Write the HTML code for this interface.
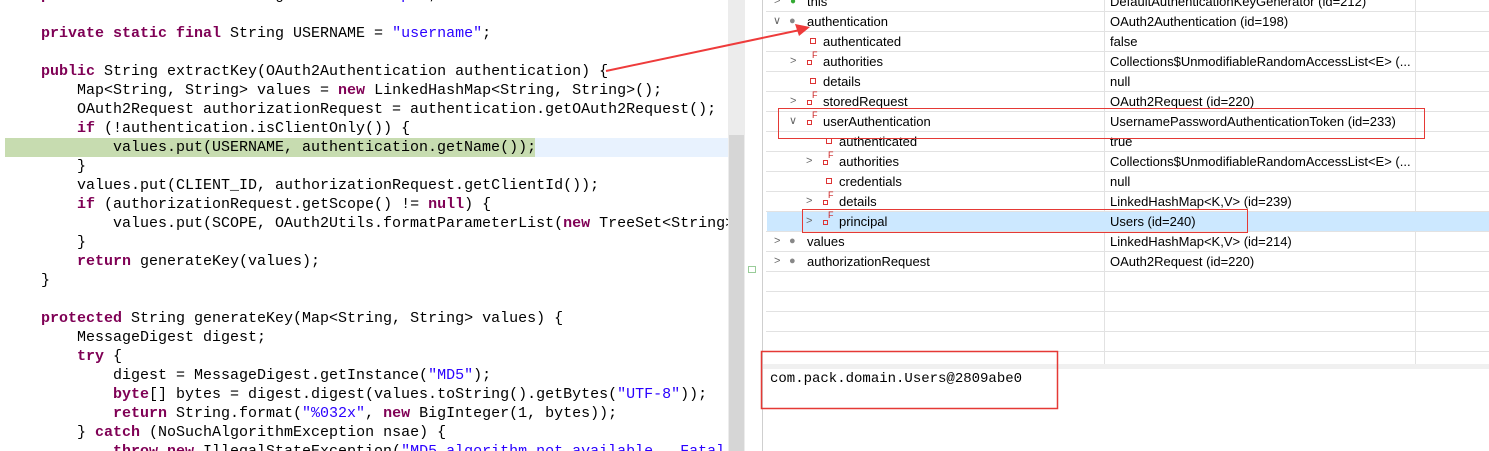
<!DOCTYPE html><html><head><style>
body{margin:0;width:1489px;height:451px;overflow:hidden;background:#fff;position:relative;font-family:"Liberation Sans",sans-serif}
.code{position:absolute;left:0;top:0;width:728px;height:451px;overflow:hidden}
.ln{position:absolute;left:0;height:19px;line-height:19px;font-family:"Liberation Mono",monospace;font-size:15px;color:#000;white-space:pre}
.k{color:#7f0055;font-weight:bold}.s{color:#2a00ff}
.sb{position:absolute;left:728px;top:0;width:17px;height:451px;background:#ececec}
.th{position:absolute;left:729px;top:135px;width:15px;height:316px;background:#d6d6d6}
.pane{position:absolute;left:762px;top:0;width:727px;height:451px;border-left:1px solid #cfcfcf}
.row{position:absolute;left:766px;width:723px;height:20px;border-bottom:1px solid #e2e2e2;font-size:13px;line-height:21px;color:#000}
.row span{position:absolute;white-space:nowrap}
.vl{position:absolute;top:0;height:364px;width:1px;background:#e2e2e2}
.ch{color:#666;font-size:11px}
.ic{width:6px;height:6px;border:1px solid #d33;box-sizing:border-box;top:7px}
.f{top:0;width:10px;height:16px}
.f::before{content:"";position:absolute;left:0;top:9px;width:5px;height:5px;border:1px solid #d33;box-sizing:border-box}
.f::after{content:"F";position:absolute;left:5px;top:-6px;font-size:9px;color:#c22}
.box{position:absolute;border:1px solid #e53935}
</style></head><body>
<div class="code">
<div style="position:absolute;left:5px;top:138px;width:530px;height:19px;background:#c7dcb0"></div>
<div style="position:absolute;left:535px;top:138px;width:193px;height:19px;background:#e8f2fe"></div>
<div class="ln" style="top:-14px;left:41px"><span class="k">private static final</span> String SCOPE = <span class="s">"scope"</span>;</div>
<div class="ln" style="top:24px;left:41px"><span class="k">private static final</span> String USERNAME = <span class="s">"username"</span>;</div>
<div class="ln" style="top:62px;left:41px"><span class="k">public</span> String extractKey(OAuth2Authentication authentication) {</div>
<div class="ln" style="top:81px;left:77px">Map&lt;String, String&gt; values = <span class="k">new</span> LinkedHashMap&lt;String, String&gt;();</div>
<div class="ln" style="top:100px;left:77px">OAuth2Request authorizationRequest = authentication.getOAuth2Request();</div>
<div class="ln" style="top:119px;left:77px"><span class="k">if</span> (!authentication.isClientOnly()) {</div>
<div class="ln" style="top:138px;left:113px">values.put(USERNAME, authentication.getName());</div>
<div class="ln" style="top:157px;left:77px">}</div>
<div class="ln" style="top:176px;left:77px">values.put(CLIENT_ID, authorizationRequest.getClientId());</div>
<div class="ln" style="top:195px;left:77px"><span class="k">if</span> (authorizationRequest.getScope() != <span class="k">null</span>) {</div>
<div class="ln" style="top:214px;left:113px">values.put(SCOPE, OAuth2Utils.formatParameterList(<span class="k">new</span> TreeSet&lt;String&gt;(authorizationRequest.getScope())));</div>
<div class="ln" style="top:233px;left:77px">}</div>
<div class="ln" style="top:252px;left:77px"><span class="k">return</span> generateKey(values);</div>
<div class="ln" style="top:271px;left:41px">}</div>
<div class="ln" style="top:309px;left:41px"><span class="k">protected</span> String generateKey(Map&lt;String, String&gt; values) {</div>
<div class="ln" style="top:328px;left:77px">MessageDigest digest;</div>
<div class="ln" style="top:347px;left:77px"><span class="k">try</span> {</div>
<div class="ln" style="top:366px;left:113px">digest = MessageDigest.getInstance(<span class="s">"MD5"</span>);</div>
<div class="ln" style="top:385px;left:113px"><span class="k">byte</span>[] bytes = digest.digest(values.toString().getBytes(<span class="s">"UTF-8"</span>));</div>
<div class="ln" style="top:404px;left:113px"><span class="k">return</span> String.format(<span class="s">"%032x"</span>, <span class="k">new</span> BigInteger(1, bytes));</div>
<div class="ln" style="top:423px;left:77px">} <span class="k">catch</span> (NoSuchAlgorithmException nsae) {</div>
<div class="ln" style="top:442px;left:113px"><span class="k">throw new</span> IllegalStateException(<span class="s">"MD5 algorithm not available.  Fatal</span></div>
</div>
<div class="sb"></div><div class="th"></div>
<div style="position:absolute;left:748px;top:266px;width:6px;height:5px;border:1px solid #9c9"></div>
<div class="pane"></div>
<div class="vl" style="left:1104px"></div><div class="vl" style="left:1415px"></div>
<div style="position:absolute;left:767px;top:211px;width:722px;height:20px;background:#cce8ff"></div>
<div class="row" style="top:-9px"><span class="ch" style="left:8px">&gt;</span><span style="left:24px;color:#3a3;font-size:10px">●</span><span style="left:41px">this</span><span style="left:344px">DefaultAuthenticationKeyGenerator  (id=212)</span></div>
<div class="row" style="top:11px"><span class="ch" style="left:7px">∨</span><span style="left:23px;color:#888;font-size:11px">●</span><span style="left:41px">authentication</span><span style="left:344px">OAuth2Authentication  (id=198)</span></div>
<div class="row" style="top:31px"><span class="ic" style="left:44px"></span><span style="left:57px">authenticated</span><span style="left:344px">false</span></div>
<div class="row" style="top:51px"><span class="ch" style="left:24px">&gt;</span><span class="f" style="left:41px"></span><span style="left:57px">authorities</span><span style="left:344px">Collections$UnmodifiableRandomAccessList&lt;E&gt;  (...</span></div>
<div class="row" style="top:71px"><span class="ic" style="left:44px"></span><span style="left:57px">details</span><span style="left:344px">null</span></div>
<div class="row" style="top:91px"><span class="ch" style="left:24px">&gt;</span><span class="f" style="left:41px"></span><span style="left:57px">storedRequest</span><span style="left:344px">OAuth2Request  (id=220)</span></div>
<div class="row" style="top:111px"><span class="ch" style="left:23px">∨</span><span class="f" style="left:41px"></span><span style="left:57px">userAuthentication</span><span style="left:344px">UsernamePasswordAuthenticationToken  (id=233)</span></div>
<div class="row" style="top:131px"><span class="ic" style="left:60px"></span><span style="left:73px">authenticated</span><span style="left:344px">true</span></div>
<div class="row" style="top:151px"><span class="ch" style="left:40px">&gt;</span><span class="f" style="left:57px"></span><span style="left:73px">authorities</span><span style="left:344px">Collections$UnmodifiableRandomAccessList&lt;E&gt;  (...</span></div>
<div class="row" style="top:171px"><span class="ic" style="left:60px"></span><span style="left:73px">credentials</span><span style="left:344px">null</span></div>
<div class="row" style="top:191px"><span class="ch" style="left:40px">&gt;</span><span class="f" style="left:57px"></span><span style="left:73px">details</span><span style="left:344px">LinkedHashMap&lt;K,V&gt;  (id=239)</span></div>
<div class="row" style="top:211px"><span class="ch" style="left:40px">&gt;</span><span class="f" style="left:57px"></span><span style="left:73px">principal</span><span style="left:344px">Users  (id=240)</span></div>
<div class="row" style="top:231px"><span class="ch" style="left:8px">&gt;</span><span style="left:23px;color:#888;font-size:11px">●</span><span style="left:41px">values</span><span style="left:344px">LinkedHashMap&lt;K,V&gt;  (id=214)</span></div>
<div class="row" style="top:251px"><span class="ch" style="left:8px">&gt;</span><span style="left:23px;color:#888;font-size:11px">●</span><span style="left:41px">authorizationRequest</span><span style="left:344px">OAuth2Request  (id=220)</span></div>
<div class="row" style="top:271px"></div><div class="row" style="top:291px"></div><div class="row" style="top:311px"></div><div class="row" style="top:331px"></div>
<div style="position:absolute;left:763px;top:364px;width:726px;height:5px;background:#f0f0f0"></div>
<div style="position:absolute;left:770px;top:371px;font-family:'Liberation Mono',monospace;font-size:14px">com.pack.domain.Users@2809abe0</div>
<div class="box" style="left:778px;top:108px;width:645px;height:29px"></div>
<div class="box" style="left:802px;top:209px;width:444px;height:22px"></div>
<svg style="position:absolute;left:0;top:0" width="1489" height="451"><line x1="606" y1="71" x2="800" y2="30" stroke="#ee3b3b" stroke-width="2"/><polygon points="810,27 795,24 799,36" fill="#ee3b3b"/><rect x="761.5" y="351.5" width="296" height="57" fill="none" stroke="#e53935" stroke-width="1.5"/></svg>
</body></html>
